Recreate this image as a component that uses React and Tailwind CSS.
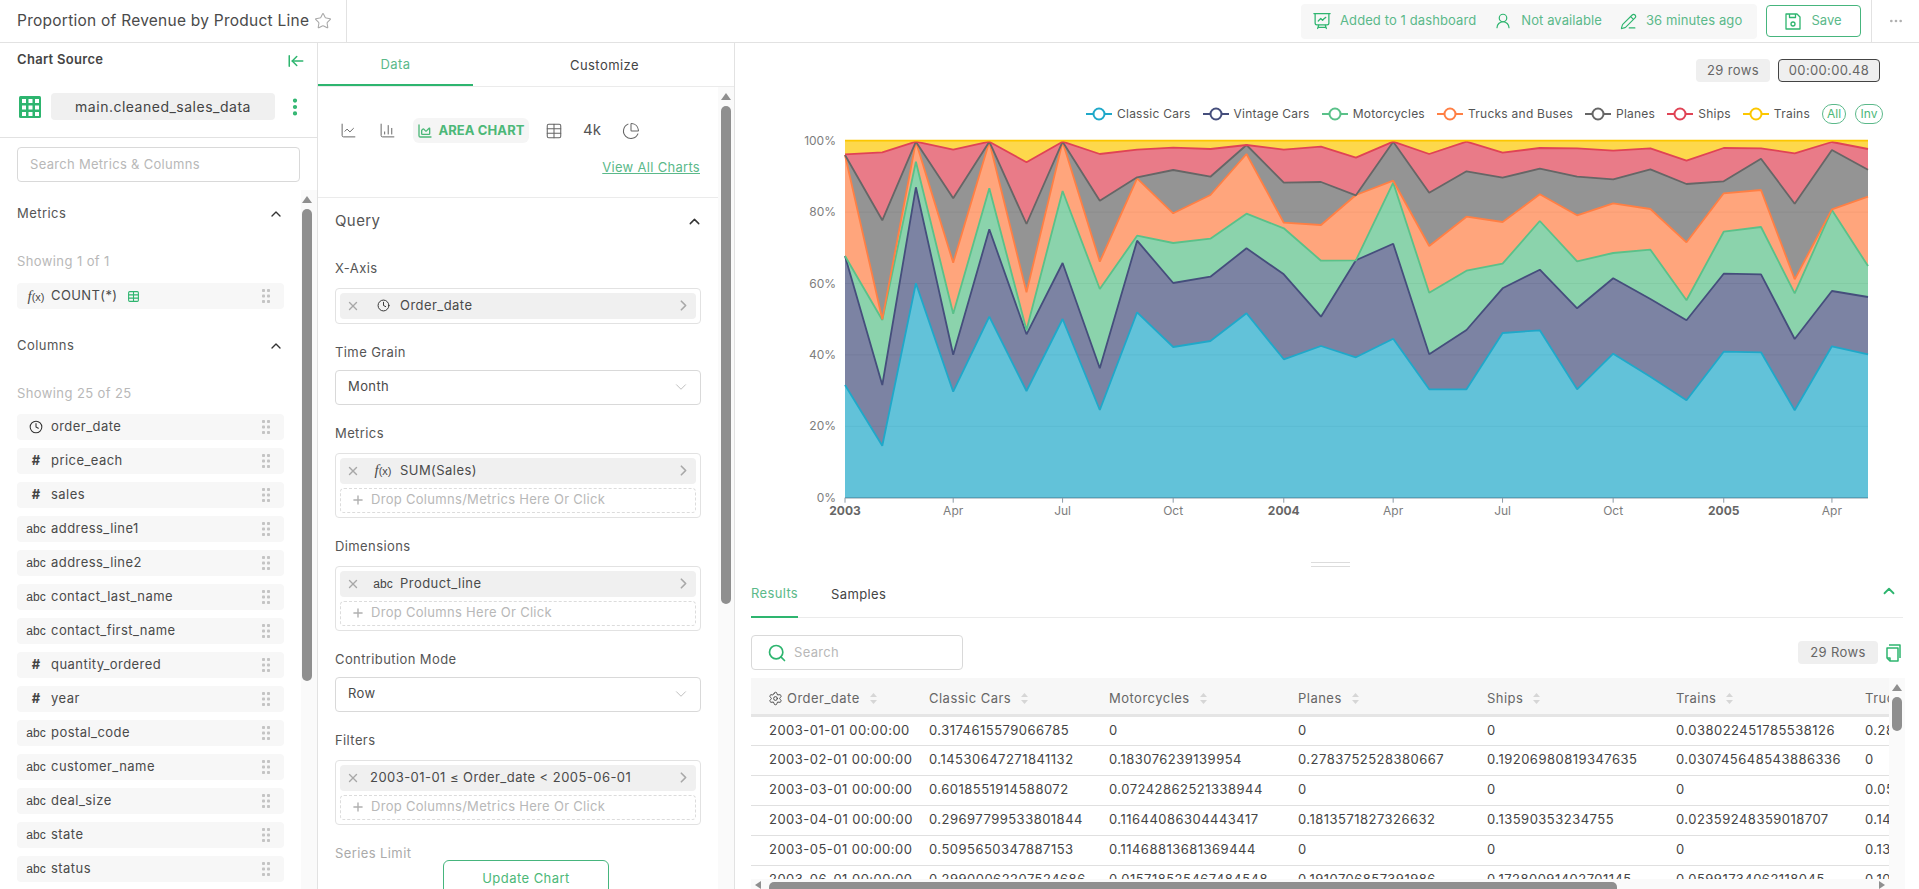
import {
  ArrowLeftToLine,
  ChartArea,
  ChartColumn,
  ChartLine,
  ChartPie,
  ChevronDown,
  ChevronRight,
  ChevronUp,
  Clock,
  Ellipsis,
  EllipsisVertical,
  PencilLine,
  Plus,
  Search,
  Settings,
  Star,
  Table,
  UserRound,
  X,
} from "lucide-react";
import { HiOutlinePresentationChartLine } from "react-icons/hi2";

const GREEN = "#2eb56f";

const columns = [
  ["time", "order_date"],
  ["num", "price_each"],
  ["num", "sales"],
  ["abc", "address_line1"],
  ["abc", "address_line2"],
  ["abc", "contact_last_name"],
  ["abc", "contact_first_name"],
  ["num", "quantity_ordered"],
  ["num", "year"],
  ["abc", "postal_code"],
  ["abc", "customer_name"],
  ["abc", "deal_size"],
  ["abc", "state"],
  ["abc", "status"],
];

// pixel rows read off the chart, one list per stacked line, bottom to top
const series = [
  { name: "Classic Cars", color: "#1FA8C9", y: [795, 977, 490, 815, 590, 813, 597, 870, 577, 681, 663, 580, 718, 678, 712, 656, 808, 808, 639, 631, 808, 701, 770, 841, 695, 697, 871, 679, 703] },
  { name: "Vintage Cars", color: "#454E7C", y: [408, 795, 202, 704, 328, 643, 429, 745, 362, 489, 470, 385, 463, 590, 421, 371, 703, 630, 505, 449, 565, 475, 537, 601, 461, 463, 657, 513, 531] },
  { name: "Motorcycles", color: "#5AC189", y: [408, 600, 125, 581, 205, 630, 213, 507, 347, 369, 356, 281, 325, 422, 421, 188, 518, 452, 431, 303, 424, 399, 389, 541, 335, 321, 520, 270, 438] },
  { name: "Trucks and Buses", color: "#FF7F44", y: [105, 598, 65, 428, 65, 517, 65, 425, 175, 280, 225, 102, 308, 315, 225, 182, 378, 290, 306, 223, 286, 250, 267, 367, 220, 210, 478, 268, 230] },
  { name: "Planes", color: "#666666", y: [105, 301, 65, 235, 65, 312, 65, 242, 172, 150, 170, 75, 188, 186, 226, 65, 218, 154, 173, 146, 170, 178, 148, 192, 184, 116, 251, 90, 149] },
  { name: "Ships", color: "#E04355", y: [103, 97, 65, 89, 65, 127, 65, 102, 89, 83, 87, 75, 89, 80, 113, 65, 102, 65, 98, 84, 85, 92, 85, 122, 84, 85, 100, 66, 87] },
  { name: "Trains", color: "#FCC700", y: Array(29).fill(62) },
];

const plot = { left: 845, right: 1868, top: 140.7, bottom: 497.7 };
const start = Date.UTC(2003, 0, 1);
const total = Date.UTC(2005, 4, 1) - start;
const xAt = (year, month) => plot.left + ((Date.UTC(year, month, 1) - start) / total) * (plot.right - plot.left);
const xs = Array.from({ length: 29 }, (_, i) => xAt(2003, i));
const toPage = (zy) => 120 + zy / 3;

const xLabels = [
  ["2003", 2003, 0, true],
  ["Apr", 2003, 3],
  ["Jul", 2003, 6],
  ["Oct", 2003, 9],
  ["2004", 2004, 0, true],
  ["Apr", 2004, 3],
  ["Jul", 2004, 6],
  ["Oct", 2004, 9],
  ["2005", 2005, 0, true],
  ["Apr", 2005, 3],
];

const tableHead = ["Classic Cars", "Motorcycles", "Planes", "Ships", "Trains", "Trucks and Buses"];
const tableRows = [
  ["2003-01-01 00:00:00", "0.3174615579066785", "0", "0", "0", "0.038022451785538126", "0.2829372"],
  ["2003-02-01 00:00:00", "0.14530647271841132", "0.183076239139954", "0.2783752528380667", "0.19206980819347635", "0.030745648543886336", "0"],
  ["2003-03-01 00:00:00", "0.6018551914588072", "0.07242862521338944", "0", "0", "0", "0.0573902"],
  ["2003-04-01 00:00:00", "0.29697799533801844", "0.11644086304443417", "0.1813571827326632", "0.13590353234755", "0.02359248359018707", "0.1446918"],
  ["2003-05-01 00:00:00", "0.5095650347887153", "0.11468813681369444", "0", "0", "0", "0.1318276"],
  ["2003-06-01 00:00:00", "0.29900062207524686", "0.015718525467484548", "0.1910706857391986", "0.17280091402701145", "0.05991734062118045", "0.1094521"],
];

function Grip() {
  return (
    <svg width="8" height="14" viewBox="0 0 8 14" className="shrink-0 text-[#c4c4c4]" fill="currentColor">
      {[1.5, 7, 12.5].map((y) => (
        <g key={y}>
          <rect x="0" y={y - 1.5} width="3" height="3" rx="0.8" />
          <rect x="5" y={y - 1.5} width="3" height="3" rx="0.8" />
        </g>
      ))}
    </svg>
  );
}

function DatasetIcon() {
  const cells = [3, 9.5, 16];
  return (
    <svg width="22" height="22" viewBox="0 0 22 22" className="shrink-0">
      <rect width="22" height="22" rx="1.5" fill={GREEN} />
      {cells.map((y) => cells.map((x) => <rect key={`${x}${y}`} x={x} y={y} width="4" height="4" fill="#fff" />))}
    </svg>
  );
}

function SaveIcon() {
  return (
    <svg width="16" height="17" viewBox="0 0 16 17" fill="none" stroke={GREEN} strokeWidth="1.3" strokeLinejoin="round">
      <path d="M1 1h11l3 3v12H1z" />
      <path d="M4.5 1v3.5h6V1" />
      <circle cx="8" cy="11" r="2" />
    </svg>
  );
}

function CopyIcon() {
  return (
    <svg width="15" height="18" viewBox="0 0 15 18" fill="none" stroke={GREEN} strokeWidth="1.5" strokeLinejoin="round" className="shrink-0">
      <path d="M3 1h11v13" />
      <path d="M1 4h11v13H4l-3-3z" />
      <path d="M1 14h3v3" />
    </svg>
  );
}

function Fx({ className = "" }) {
  return (
    <span className={`whitespace-nowrap text-[11px] text-[#4a4a4a] [font-family:'Liberation_Sans',sans-serif] ${className}`}>
      <span className="text-[15px] italic [font-family:'Liberation_Serif',serif]">f</span>(x)
    </span>
  );
}

function TypeIcon({ type }) {
  if (type === "time") return <Clock size={14} className="text-[#333]" strokeWidth={1.8} />;
  if (type === "num") return <span className="text-[13px] font-bold text-[#444]">#</span>;
  return <span className="text-[12px] text-[#444] [font-family:'Liberation_Sans',sans-serif]">abc</span>;
}

function ColumnRow({ type, name }) {
  return (
    <div className="flex h-[26px] w-[267px] shrink-0 items-center rounded bg-[#f7f7f7] pr-[14px]">
      <div className="flex w-[34px] shrink-0 justify-center pl-1">
        <TypeIcon type={type} />
      </div>
      <span className="flex-1 truncate text-[13px] tracking-[0.45px] text-[#4a4a4a]">{name}</span>
      <Grip />
    </div>
  );
}

function Scrollbar({ thumb, className = "" }) {
  return (
    <div className={`flex w-[16px] shrink-0 flex-col items-center bg-[#fafafa] ${className}`}>
      <div className="mt-[6px] h-0 w-0 border-x-[5px] border-b-[7px] border-x-transparent border-b-[#8f8f8f]" />
      <div className={`mt-[6px] w-[10px] rounded-[5px] bg-[#8f8f8f] ${thumb}`} />
    </div>
  );
}

function SectionHead({ title, className = "" }) {
  return (
    <div className={`flex h-6 w-[267px] items-center justify-between ${className}`}>
      <span className="text-[13px] tracking-[0.45px] text-[#555]">{title}</span>
      <ChevronUp size={16} className="text-[#333]" />
    </div>
  );
}

function Sidebar() {
  return (
    <aside className="flex w-[318px] shrink-0 flex-col border-r border-[#e2e2e2]">
      <div className="flex h-[34px] items-center justify-between pl-[17px] pr-[12px]">
        <span className="text-[13px] font-semibold tracking-[0.3px] text-[#444]">Chart Source</span>
        <ArrowLeftToLine size={18} className="mt-[2px]" style={{ color: GREEN }} />
      </div>
      <div className="mt-[16px] flex items-center pl-[19px]">
        <DatasetIcon />
        <div className="ml-[10px] flex h-[27px] w-[224px] items-center justify-center rounded bg-[#f0f0f0] text-[14px] tracking-[0.5px] text-[#444]">
          main.cleaned_sales_data
        </div>
        <EllipsisVertical size={22} strokeWidth={2.6} style={{ color: GREEN }} className="ml-[9px]" />
      </div>
      <div className="mt-[17px] border-b border-[#e2e2e2]" />
      <div className="ml-[17px] mt-[9px] flex h-[35px] w-[283px] items-center rounded border border-[#d9d9d9] px-3 text-[13px] tracking-[0.3px] text-[#b8b8b8]">
        Search Metrics &amp; Columns
      </div>
      <div className="mt-[8px] flex min-h-0 flex-1 overflow-hidden">
        <div className="min-w-0 flex-1 overflow-hidden pl-[17px]">
          <SectionHead title="Metrics" className="mt-[12px]" />
          <div className="mt-[25px] h-5 text-[13px] leading-5 tracking-[0.4px] text-[#b8b8b8]">Showing 1 of 1</div>
          <div className="mt-[12px] flex h-[26px] w-[267px] items-center rounded bg-[#f7f7f7] pr-[14px]">
            <div className="flex w-[34px] shrink-0 justify-center pl-1">
              <Fx />
            </div>
            <span className="text-[13px] tracking-[0.4px] text-[#4a4a4a]">COUNT(*)</span>
            <Table size={13} style={{ color: GREEN }} className="ml-[9px]" />
            <div className="flex-1" />
            <Grip />
          </div>
          <SectionHead title="Columns" className="mt-[25px]" />
          <div className="mt-[25px] h-5 text-[13px] leading-5 tracking-[0.4px] text-[#b8b8b8]">Showing 25 of 25</div>
          <div className="mt-[11px] flex flex-col gap-2">
            {columns.map(([type, name]) => (
              <ColumnRow key={name} type={type} name={name} />
            ))}
          </div>
        </div>
        <Scrollbar thumb="h-[472px]" className="pr-[4px]" />
      </div>
    </aside>
  );
}

function Pill({ icon, children }) {
  return (
    <div className="flex h-[26px] items-center rounded bg-[#f0f0f0] pl-[6px] pr-[4px]">
      <X size={14} strokeWidth={2.4} className="shrink-0 text-[#a8a8a8]" />
      <div className="ml-[6px] flex w-[34px] shrink-0 justify-center">{icon}</div>
      <span className="flex-1 text-[13px] tracking-[0.45px] text-[#4a4a4a]">{children}</span>
      <ChevronRight size={17} strokeWidth={2.4} className="shrink-0 text-[#a8a8a8]" />
    </div>
  );
}

function DropZone({ text }) {
  return (
    <div className="flex h-[25px] items-center rounded border border-dashed border-[#dcdcdc] pl-[10px] text-[13px] tracking-[0.3px] text-[#b8b8b8]">
      <Plus size={14} strokeWidth={2.4} className="mr-[6px] text-[#b0b0b0]" />
      {text}
    </div>
  );
}

function Field({ label, tight, children }) {
  return (
    <div className="mb-[18px]">
      <div className={`h-5 text-[13px] leading-5 tracking-[0.4px] text-[#555] ${tight ? "mb-[8px]" : "mb-[10px]"}`}>{label}</div>
      {children}
    </div>
  );
}

function Box({ children }) {
  return <div className="flex flex-col gap-1 rounded border border-[#e2e2e2] p-1">{children}</div>;
}

function SelectBox({ value }) {
  return (
    <div className="flex h-[35px] items-center justify-between rounded border border-[#d9d9d9] pl-[12px] pr-[10px] text-[13px] tracking-[0.4px] text-[#4a4a4a]">
      {value}
      <ChevronDown size={18} strokeWidth={1.3} className="text-[#bdbdbd]" />
    </div>
  );
}

function QueryPanel() {
  return (
    <section className="relative flex w-[417px] shrink-0 flex-col border-r border-[#e2e2e2]">
      <div className="flex h-[44px] shrink-0 border-b border-[#ebebeb] text-[13px] tracking-[0.45px]">
        <div className="flex w-[155px] items-center justify-center border-b-2 pt-[3px] text-[#5bb98a]" style={{ borderColor: GREEN }}>
          Data
        </div>
        <div className="flex flex-1 items-center justify-center pl-[2px] pt-[3px] text-[#444]">Customize</div>
      </div>
      <div className="flex min-h-0 flex-1 overflow-hidden">
        <div className="min-w-0 flex-1 overflow-hidden">
          <div className="flex items-center pl-[22px] pt-[31px] text-[#666]">
            <ChartLine size={17} strokeWidth={1.4} />
            <ChartColumn size={17} strokeWidth={1.4} className="ml-[22px]" />
            <div className="ml-[17px] flex h-[25px] w-[116px] items-center justify-center gap-[5px] rounded-md bg-[#f5f5f5] text-[13px] font-bold tracking-[0.1px]" style={{ color: "#4cb878" }}>
              <ChartArea size={16} strokeWidth={2} />
              AREA CHART
            </div>
            <Table size={18} strokeWidth={1.4} className="ml-[16px]" />
            <span className="ml-[20px] text-[15px] text-[#555]">4k</span>
            <ChartPie size={18} strokeWidth={1.4} className="ml-[21px]" />
          </div>
          <div className="mt-[15px] pr-[18px] text-right text-[13px] tracking-[0.3px] text-[#5bb98a] underline">View All Charts</div>
          <div className="mt-[19px] border-b border-[#ebebeb]" />
          <div className="px-[17px]">
            <div className="mb-[24px] mt-[12px] flex h-6 items-center justify-between">
              <span className="text-[15px] tracking-[0.4px] text-[#555]">Query</span>
              <ChevronUp size={17} className="-mr-[2px] text-[#333]" />
            </div>
            <Field label="X-Axis">
              <Box>
                <Pill icon={<Clock size={13} className="text-[#333]" strokeWidth={1.8} />}>Order_date</Pill>
              </Box>
            </Field>
            <Field label="Time Grain" tight>
              <SelectBox value="Month" />
            </Field>
            <Field label="Metrics">
              <Box>
                <Pill icon={<Fx />}>SUM(Sales)</Pill>
                <DropZone text="Drop Columns/Metrics Here Or Click" />
              </Box>
            </Field>
            <Field label="Dimensions">
              <Box>
                <Pill icon={<TypeIcon type="abc" />}>Product_line</Pill>
                <DropZone text="Drop Columns Here Or Click" />
              </Box>
            </Field>
            <Field label="Contribution Mode" tight>
              <SelectBox value="Row" />
            </Field>
            <Field label="Filters">
              <Box>
                <div className="flex h-[26px] items-center rounded bg-[#f0f0f0] pl-[6px] pr-[4px]">
                  <X size={14} strokeWidth={2.4} className="shrink-0 text-[#a8a8a8]" />
                  <span className="ml-[10px] flex-1 whitespace-nowrap text-[13px] tracking-[0.45px] text-[#4a4a4a]">2003-01-01 ≤ Order_date &lt; 2005-06-01</span>
                  <ChevronRight size={17} strokeWidth={2.4} className="shrink-0 text-[#a8a8a8]" />
                </div>
                <DropZone text="Drop Columns/Metrics Here Or Click" />
              </Box>
            </Field>
            <div className="h-5 text-[13px] leading-5 tracking-[0.4px] text-[#aaa]">Series Limit</div>
          </div>
        </div>
        <Scrollbar thumb="h-[498px]" />
      </div>
      <div className="absolute left-[125px] top-[817px] flex h-[42px] w-[166px] items-start justify-center rounded-md border border-[#46b57d] bg-white pt-[8px] text-[13px] tracking-[0.45px] text-[#4cb878]">
        Update Chart
      </div>
    </section>
  );
}

function LegendItem({ name, color }) {
  return (
    <div className="flex items-center gap-[5px]">
      <svg width="26" height="14" viewBox="0 0 26 14" fill="none" stroke={color} strokeWidth="2">
        <path d="M0 7h7M19 7h7" />
        <circle cx="13" cy="7" r="5.5" />
      </svg>
      <span className="text-[12px] tracking-[0.25px] text-[#555]">{name}</span>
    </div>
  );
}

function AreaChart() {
  const points = (ys) => ys.map((y, i) => `${xs[i].toFixed(1)},${toPage(y).toFixed(1)}`);
  return (
    <svg viewBox="735 128 1184 400" width="1184" height="400" className="block shrink-0">
      {[0, 20, 40, 60, 80, 100].map((p) => {
        const y = plot.bottom - (p / 100) * (plot.bottom - plot.top);
        return (
          <g key={p}>
            <line x1={plot.left} x2={plot.right} y1={y} y2={y} stroke={p === 0 ? "#8a9aa6" : "#e4e4e4"} strokeWidth={p === 0 ? 1.5 : 1} />
            <text x="836" y={y + 4} textAnchor="end" fontSize="12" fill="#7d7d7d" fontFamily="Inter, sans-serif">
              {p}%
            </text>
          </g>
        );
      })}
      {series.map((s, idx) => {
        const lower = idx === 0 ? xs.map((x) => `${x.toFixed(1)},${plot.bottom}`) : points(series[idx - 1].y);
        return (
          <polygon key={s.name} points={[...points(s.y), ...lower.reverse()].join(" ")} fill={s.color} fillOpacity="0.7" />
        );
      })}
      {series.map((s) => (
        <polyline key={s.name} points={points(s.y).join(" ")} fill="none" stroke={s.color} strokeWidth="1.8" strokeLinejoin="bevel" />
      ))}
      {xLabels.map(([label, y, m, bold]) => {
        const x = xAt(y, m);
        return (
          <g key={`${label}${y}`}>
            <line x1={x} x2={x} y1={plot.bottom} y2={plot.bottom + 5} stroke="#8a9aa6" />
            <text x={x} y="515" textAnchor="middle" fontSize="12" fontWeight={bold ? 700 : 400} fill={bold ? "#666" : "#7d7d7d"} fontFamily="Inter, sans-serif">
              {label}
            </text>
          </g>
        );
      })}
    </svg>
  );
}

function SortCaret() {
  return (
    <svg width="7" height="11" viewBox="0 0 7 11" className="ml-[10px] shrink-0" fill="#d6d6d6">
      <path d="M3.5 0 7 4H0zM3.5 11 0 7h7z" />
    </svg>
  );
}

function ResultsTable() {
  return (
    <div className="ml-[16px] mr-[14px] mt-[8px] flex min-h-0 flex-1 flex-col overflow-hidden">
      <div className="flex h-[201px] shrink-0">
        <div className="min-w-0 flex-1 overflow-hidden">
          <table className="w-[1320px] table-fixed border-collapse text-left text-[13px] tracking-[0.48px]">
            <colgroup>
              <col className="w-[178px]" />
              <col className="w-[180px]" />
              <col className="w-[189px]" />
              <col className="w-[189px]" />
              <col className="w-[189px]" />
              <col className="w-[189px]" />
              <col className="w-[206px]" />
            </colgroup>
            <thead>
              <tr className="h-[37px] border-b-[3px] border-[#e5e5e5] bg-[#f7f7f7] text-[#666]">
                <th className="pl-[17px] pt-[5px] font-normal">
                  <div className="flex items-center">
                    <Settings size={15} strokeWidth={1.5} className="mr-[4px] shrink-0 text-[#444]" />
                    Order_date
                    <SortCaret />
                  </div>
                </th>
                {tableHead.map((h) => (
                  <th key={h} className="pt-[5px] font-normal">
                    <div className="flex items-center whitespace-nowrap">
                      {h}
                      <SortCaret />
                    </div>
                  </th>
                ))}
              </tr>
            </thead>
            <tbody>
              {tableRows.map((row) => (
                <tr key={row[0]} className="h-[30px] border-b border-[#e0e0e0] text-[#444]">
                  {row.map((cell, i) => (
                    <td key={i} className={`whitespace-nowrap align-middle ${i === 0 ? "pl-[18px]" : ""}`}>
                      {cell}
                    </td>
                  ))}
                </tr>
              ))}
            </tbody>
          </table>
        </div>
        <Scrollbar thumb="h-[34px]" />
      </div>
      <div className="flex h-[10px] shrink-0 items-start bg-[#fafafa]">
        <div className="ml-[4px] mt-[2px] h-0 w-0 border-y-[4px] border-r-[6px] border-y-transparent border-r-[#8f8f8f]" />
        <div className="ml-[8px] mt-[3px] h-[12px] w-[848px] rounded-[5px] bg-[#8f8f8f]" />
        <div className="flex-1" />
        <div className="mr-[20px] mt-[2px] h-0 w-0 border-y-[4px] border-l-[6px] border-y-transparent border-l-[#8f8f8f]" />
      </div>
    </div>
  );
}

function ResultsPanel() {
  return (
    <section className="flex min-w-0 flex-1 flex-col overflow-hidden">
      <div className="mt-[16px] flex justify-end gap-[8px] pr-[39px] text-[13px] tracking-[0.35px] text-[#666]">
        <div className="flex h-[23px] w-[74px] items-center justify-center rounded bg-[#efefef]">29 rows</div>
        <div className="flex h-[23px] w-[102px] items-center justify-center rounded border border-[#444] bg-[#efefef]">00:00:00.48</div>
      </div>
      <div className="mt-[22px] flex h-[20px] items-center justify-end gap-[12px] pr-[36px]">
        {series.map((s) => (
          <LegendItem key={s.name} name={s.name} color={s.color} />
        ))}
        <div className="flex h-[20px] w-[24px] items-center justify-center rounded-full border border-[#5bb98a] text-[12px] text-[#4cb878]">All</div>
        <div className="-ml-[3px] flex h-[20px] w-[28px] items-center justify-center rounded-full border border-[#5bb98a] text-[12px] text-[#4cb878]">Inv</div>
      </div>
      <div className="mt-[4px]">
        <AreaChart />
      </div>
      <div className="mx-auto mt-[34px] h-[5px] w-[39px] translate-x-[3px] border-y border-[#dcdcdc]" />
      <div className="mx-[16px] mt-[5px] flex h-[46px] shrink-0 items-center border-b border-[#ebebeb] text-[13px] tracking-[0.35px]">
        <div className="flex h-[46px] items-center border-b-2 pt-[1px] text-[#5bb98a]" style={{ borderColor: GREEN }}>
          Results
        </div>
        <div className="ml-[33px] text-[#444]">Samples</div>
        <div className="flex-1" />
        <ChevronUp size={18} strokeWidth={2.4} className="-mt-[8px] mr-[5px]" style={{ color: GREEN }} />
      </div>
      <div className="mx-[16px] mt-[17px] flex h-[35px] shrink-0 items-center">
        <div className="flex h-[35px] w-[212px] items-center rounded border border-[#d9d9d9] pl-[15px] text-[13px] tracking-[0.3px] text-[#b8b8b8]">
          <Search size={20} strokeWidth={2} className="mr-[7px]" style={{ color: GREEN }} />
          Search
        </div>
        <div className="flex-1" />
        <div className="flex h-[23px] w-[80px] items-center justify-center rounded bg-[#efefef] text-[13px] tracking-[0.35px] text-[#666]">29 Rows</div>
        <div className="ml-[8px] mr-[2px]">
          <CopyIcon />
        </div>
      </div>
      <ResultsTable />
    </section>
  );
}

function TopBar() {
  return (
    <header className="flex h-[43px] shrink-0 items-center border-b border-[#e2e2e2]">
      <h1 className="ml-[17px] whitespace-nowrap text-[15.5px] font-normal tracking-[0.25px] text-[#4a4a4a]">Proportion of Revenue by Product Line</h1>
      <Star size={18} strokeWidth={1.4} className="ml-[5px] text-[#a8a8a8]" />
      <div className="ml-[14px] h-full border-r border-[#e2e2e2]" />
      <div className="flex-1" />
      <div className="flex h-[35px] w-[456px] items-center rounded bg-[#f7f7f7] pl-[11px] text-[13px] tracking-[0.1px] text-[#5bb98a]">
        <HiOutlinePresentationChartLine size={20} style={{ color: GREEN }} />
        <span className="ml-[8px]">Added to 1 dashboard</span>
        <UserRound size={18} strokeWidth={1.6} className="ml-[18px]" style={{ color: GREEN }} />
        <span className="ml-[9px]">Not available</span>
        <PencilLine size={17} strokeWidth={1.6} className="ml-[18px]" style={{ color: GREEN }} />
        <span className="ml-[9px]">36 minutes ago</span>
      </div>
      <div className="ml-[9px] flex h-[32px] w-[95px] items-center justify-center gap-[10px] rounded border border-[#46b57d] text-[13px] text-[#5bb98a]">
        <SaveIcon />
        Save
      </div>
      <div className="ml-[10px] flex h-full w-[48px] items-center justify-center border-l border-[#e2e2e2]">
        <Ellipsis size={16} className="text-[#b0b0b0]" />
      </div>
    </header>
  );
}

export default function App() {
  return (
    <div className="flex h-screen flex-col overflow-hidden bg-white [font-family:Inter,sans-serif]">
      <TopBar />
      <div className="flex min-h-0 flex-1">
        <Sidebar />
        <QueryPanel />
        <ResultsPanel />
      </div>
    </div>
  );
}
